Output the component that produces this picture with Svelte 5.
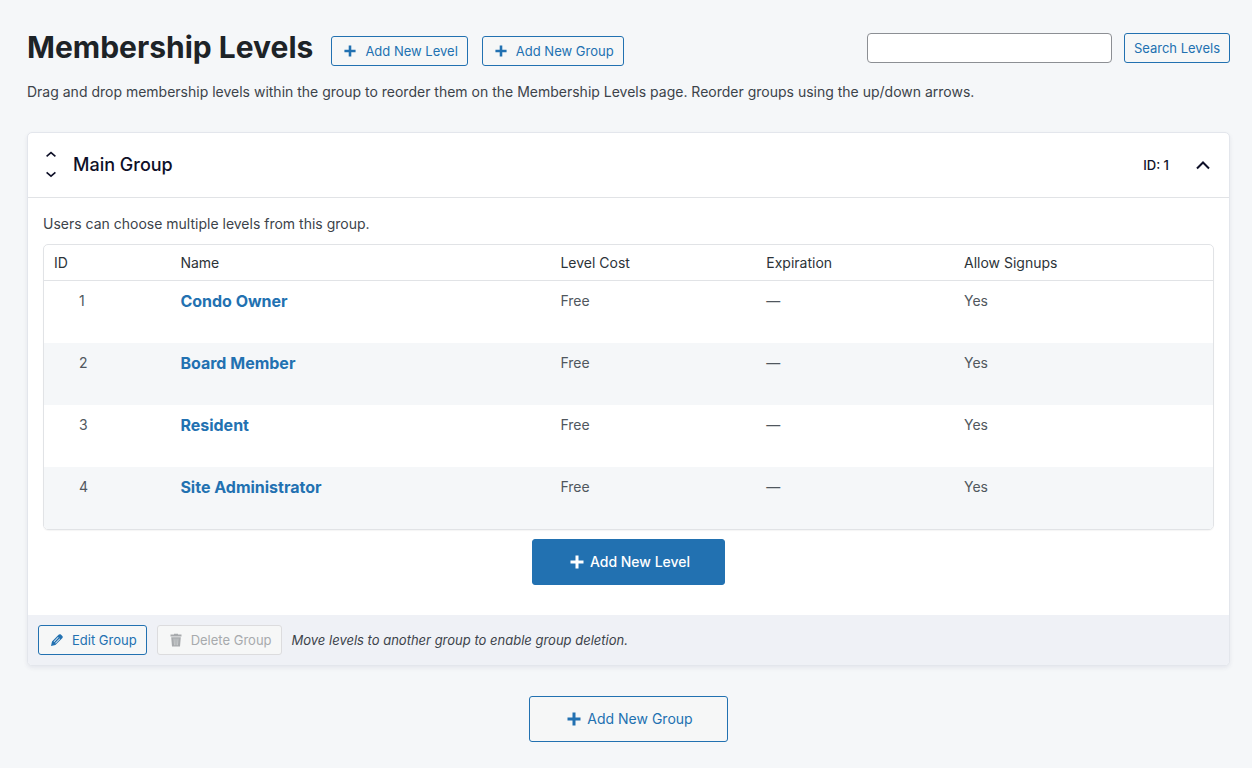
<script lang="ts">
  type Level = { id: number; name: string; cost: string; expiration: string; signups: string }

  let levels: Level[] = [
    { id: 1, name: 'Condo Owner', cost: 'Free', expiration: '—', signups: 'Yes' },
    { id: 2, name: 'Board Member', cost: 'Free', expiration: '—', signups: 'Yes' },
    { id: 3, name: 'Resident', cost: 'Free', expiration: '—', signups: 'Yes' },
    { id: 4, name: 'Site Administrator', cost: 'Free', expiration: '—', signups: 'Yes' }
  ]
  let search = $state('')
  let open = $state(true)
</script>

{#snippet plus()}
  <svg class="plus" viewBox="0 0 14 14" aria-hidden="true">
    <path d="M5.5 0.5h3v5h5v3h-5v5h-3v-5h-5v-3h5z" />
  </svg>
{/snippet}

<main class="page">
  <header class="top">
    <div class="heading">
      <h1>Membership Levels</h1>
      <button type="button" class="button">{@render plus()}Add New Level</button>
      <button type="button" class="button">{@render plus()}Add New Group</button>
    </div>
    <form class="search" onsubmit={(e) => e.preventDefault()}>
      <input type="search" aria-label="Search Levels" bind:value={search} />
      <button type="submit" class="button plain">Search Levels</button>
    </form>
  </header>

  <p class="intro">
    Drag and drop membership levels within the group to reorder them on the Membership Levels page.
    Reorder groups using the up/down arrows.
  </p>

  <section class="card">
    <div class="card-header">
      <div class="order">
        <button type="button" aria-label="Move up">
          <svg viewBox="0 0 12 8" aria-hidden="true"><path d="M1.6 5.4L6 1.6l4.4 3.8" /></svg>
        </button>
        <button type="button" aria-label="Move down">
          <svg viewBox="0 0 12 8" aria-hidden="true"><path d="M1.6 1.4L6 5.2l4.4-3.8" /></svg>
        </button>
      </div>
      <h2>Main Group</h2>
      <span class="group-id">ID: 1</span>
      <button
        type="button"
        class="toggle"
        aria-label="Toggle group"
        aria-expanded={open}
        onclick={() => (open = !open)}
      >
        <svg class:closed={!open} viewBox="0 0 16 10" aria-hidden="true">
          <path d="M2 8.5l6-6 6 6" />
        </svg>
      </button>
    </div>

    {#if open}
      <div class="card-body">
        <p class="hint">Users can choose multiple levels from this group.</p>
        <div class="table-wrap">
          <table>
            <thead>
              <tr>
                <th class="col-id">ID</th>
                <th class="col-name">Name</th>
                <th class="col-cost">Level Cost</th>
                <th class="col-expiration">Expiration</th>
                <th>Allow Signups</th>
              </tr>
            </thead>
            <tbody>
              {#each levels as level (level.id)}
                <tr>
                  <td class="id">{level.id}</td>
                  <td class="name"><a href="#level-{level.id}">{level.name}</a></td>
                  <td>{level.cost}</td>
                  <td>{level.expiration}</td>
                  <td>{level.signups}</td>
                </tr>
              {/each}
            </tbody>
          </table>
        </div>
        <button type="button" class="button large primary">{@render plus()}Add New Level</button>
      </div>

      <div class="card-footer">
        <button type="button" class="button">
          <svg viewBox="0 0 14 14" aria-hidden="true">
            <path
              fill-rule="evenodd"
              d="M8.6 1.7c.7-.7 1.5-.7 2.2-.1l1.5 1.5c.7.7.6 1.5-.1 2.2L5.4 12 1 13l1-4.4zM8 4L3.6 8.4l.6.6L8.6 4.6zM9.5 5.5L5.1 9.9l.6.6 4.4-4.4z"
            />
          </svg>
          Edit Group
        </button>
        <button type="button" class="button" disabled>
          <svg viewBox="0 0 14 14" aria-hidden="true">
            <path
              fill-rule="evenodd"
              d="M5 1.5V.8h4v.7h3.5v2h-11v-2zM2.2 4.3h9.6L11 13.5H3zM4.8 5.5l.2 6.7h.4l-.2-6.7zM6.8 5.5v6.7h.4V5.5zM8.8 5.5l-.2 6.7H9l.2-6.7z"
            />
          </svg>
          Delete Group
        </button>
        <em>Move levels to another group to enable group deletion.</em>
      </div>
    {/if}
  </section>

  <button type="button" class="button large">{@render plus()}Add New Group</button>
</main>

<style>
  :global(body) {
    background-color: #f5f7f9;
  }
  .page {
    display: flex;
    flex-direction: column;
    padding: 28px 22px 24px 27px;
    font-family: Inter, 'Liberation Sans', sans-serif;
    font-size: 14px;
    line-height: 20px;
    color: #3c434a;
  }
  h1,
  h2,
  p {
    margin: 0;
  }

  .top {
    display: flex;
    justify-content: space-between;
    align-items: flex-start;
  }
  .heading {
    display: flex;
    align-items: flex-end;
    gap: 14px;
  }
  h1 {
    margin-right: 4px;
    font-size: 30px;
    line-height: 38px;
    font-weight: 700;
    color: #1d2327;
  }
  .search {
    display: flex;
    gap: 12px;
    padding-top: 5px;
  }
  .search input {
    box-sizing: border-box;
    width: 245px;
    height: 30px;
    padding: 0 8px;
    border: 1px solid #8c8f94;
    border-radius: 4px;
    background-color: white;
    font: inherit;
    color: #2c3338;
  }

  .button {
    display: inline-flex;
    align-items: center;
    gap: 8px;
    box-sizing: border-box;
    height: 30px;
    padding: 0 9px 0 11px;
    border: 1px solid #2271b1;
    border-radius: 3px;
    background-color: #f6f7f7;
    font-family: inherit;
    font-size: 13px;
    line-height: 20px;
    color: #2271b1;
    white-space: nowrap;
    cursor: pointer;
  }
  .button svg {
    width: 14px;
    height: 14px;
    fill: currentColor;
  }
  .button .plus {
    width: 12px;
    height: 12px;
    margin: 0 1px;
  }
  .button.plain {
    padding: 0 9px;
  }
  .button:disabled {
    border-color: #dcdcde;
    color: #a7aaad;
    cursor: default;
  }
  .button.large {
    align-self: center;
    gap: 6px;
    height: 46px;
    padding: 0 34px 0 37px;
    font-size: 14px;
  }
  .button.large .plus {
    width: 14px;
    height: 14px;
    margin: 0;
  }
  .button.primary {
    background-color: #2271b1;
    font-weight: 500;
    color: white;
  }

  .intro {
    padding: 16px 0 30px;
  }

  .card {
    margin-bottom: 30px;
    border: 1px solid #e3e6ec;
    border-radius: 5px;
    background-color: white;
    box-shadow: 0 2px 4px rgba(40, 40, 90, 0.08);
    overflow: hidden;
  }
  .card-header {
    display: flex;
    align-items: center;
    height: 64px;
    padding: 0 18px 0 17px;
    border-bottom: 1px solid #e1e3e6;
    color: #0e1028;
  }
  .order {
    display: flex;
    flex-direction: column;
    gap: 4px;
    margin-right: 16px;
  }
  .order button,
  .toggle {
    display: flex;
    align-items: center;
    justify-content: center;
    padding: 0;
    border: 0;
    background: none;
    color: inherit;
    cursor: pointer;
  }
  .order button {
    width: 12px;
    height: 16px;
  }
  .order svg {
    width: 12px;
    height: 8px;
  }
  .order path,
  .toggle path {
    fill: none;
    stroke: currentColor;
    stroke-width: 2;
  }
  .order path {
    stroke-width: 1.6;
  }
  h2 {
    flex: 1;
    font-size: 18px;
    line-height: 24px;
    font-weight: 500;
  }
  .group-id {
    margin-right: 26px;
    font-size: 13px;
    font-weight: 500;
  }
  .toggle svg {
    width: 16px;
    height: 10px;
  }
  .toggle .closed {
    transform: rotate(180deg);
  }

  .card-body {
    display: flex;
    flex-direction: column;
    padding: 16px 15px 30px;
  }
  .hint {
    margin-bottom: 10px;
  }
  .table-wrap {
    margin-bottom: 9px;
    border: 1px solid #e1e3e6;
    border-radius: 5px;
    box-shadow: 0 1px 1px rgba(0, 0, 0, 0.04);
    overflow: hidden;
  }
  table {
    width: 100%;
    border-spacing: 0;
    table-layout: fixed;
  }
  th {
    padding: 8px 10px 7px;
    border-bottom: 1px solid #e1e3e6;
    font-weight: 400;
    text-align: left;
    color: #2c3338;
  }
  .col-id {
    width: 9.1%;
  }
  .col-name {
    width: 30.8%;
  }
  .col-cost {
    width: 15.9%;
  }
  .col-expiration {
    width: 15.2%;
  }
  td {
    height: 42px;
    padding: 10px;
    vertical-align: top;
    color: #50575e;
  }
  td.id {
    padding-left: 35px;
  }
  tbody tr:nth-child(even) {
    background-color: #f5f7f9;
  }
  .name {
    font-size: 16px;
    font-weight: 700;
  }
  .name a {
    color: #2271b1;
    text-decoration: none;
  }

  .card-footer {
    display: flex;
    align-items: center;
    gap: 10px;
    padding: 10px;
    background-color: #eff1f6;
    font-size: 13px;
  }
</style>
